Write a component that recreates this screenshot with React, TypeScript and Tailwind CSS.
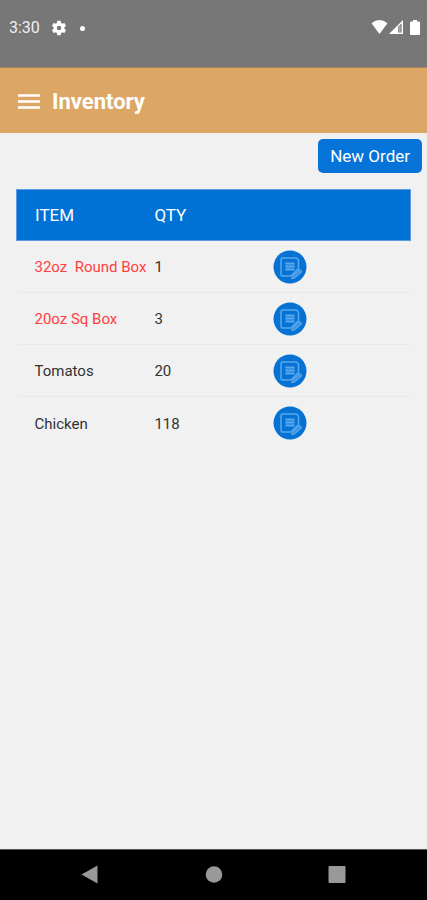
import React from 'react';

interface InventoryItem {
  id: number;
  name: string;
  qty: number;
  isLow?: boolean;
}

const items: InventoryItem[] = [
  { id: 1, name: '32oz  Round Box', qty: 1, isLow: true },
  { id: 2, name: '20oz Sq Box', qty: 3, isLow: true },
  { id: 3, name: 'Tomatos', qty: 20 },
  { id: 4, name: 'Chicken', qty: 118 },
];

const EditIcon: React.FC = () => (
  <svg viewBox="0 0 34 34" className="size-[34px]" aria-hidden="true">
    <circle cx="17" cy="17" r="16.5" fill="#0673d4" />
    <g fill="none" stroke="#5ba8ea" strokeWidth="1.5" strokeLinejoin="round">
      <path d="M25.5 18.5V10L23.5 8H9.5Q8 8 8 9.5V24.5Q8 26 9.5 26H18L25.5 18.5" />
      <path d="M18.8 28.6L19.6 25.8L26.6 19.6L28.6 21.6L21.6 27.8Z" fill="#3a92e2" strokeWidth="1.2" />
    </g>
    <path d="M12.5 12.5H21.5V20.5H12.5Z" fill="#3a92e2" />
    <path d="M12.5 13.3H21.5M12.5 16.5H21.5M12.5 19.7H21.5" stroke="#5ba8ea" strokeWidth="1.2" />
  </svg>
);

const StatusBar: React.FC = () => (
  <div className="flex h-[67px] flex-shrink-0 items-start justify-between bg-[#777777] pl-[9px] pr-[7px] pt-[18px] text-white">
    <div className="flex h-5 items-center">
      <span className="text-base text-[#f0f0f0]">3:30</span>
      <svg viewBox="0 0 24 24" className="ml-[10px] size-[18px]" fill="currentColor" aria-hidden="true">
        <path d="M19.14 12.94c.04-.3.06-.61.06-.94 0-.32-.02-.64-.07-.94l2.03-1.58c.18-.14.23-.41.12-.61l-1.92-3.32c-.12-.22-.37-.29-.59-.22l-2.39.96c-.5-.38-1.03-.7-1.62-.94l-.36-2.54c-.04-.24-.24-.41-.48-.41h-3.84c-.24 0-.43.17-.47.41l-.36 2.54c-.59.24-1.13.57-1.62.94l-2.39-.96c-.22-.08-.47 0-.59.22L2.74 8.87c-.12.21-.08.47.12.61l2.03 1.58c-.05.3-.09.63-.09.94s.02.64.07.94l-2.03 1.58c-.18.14-.23.41-.12.61l1.92 3.32c.12.22.37.29.59.22l2.39-.96c.5.38 1.03.7 1.62.94l.36 2.54c.05.24.24.41.48.41h3.84c.24 0 .44-.17.47-.41l.36-2.54c.59-.24 1.13-.56 1.62-.94l2.39.96c.22.08.47 0 .59-.22l1.92-3.32c.12-.22.07-.47-.12-.61l-2.01-1.58zM12 15a3 3 0 1 1 0-6 3 3 0 0 1 0 6z" />
      </svg>
      <span className="ml-3 size-[5px] rounded-full bg-white" />
    </div>
    <div className="flex h-[18px] items-center">
      <svg viewBox="0 0 17 14" className="h-[14px] w-[17px]" fill="currentColor" aria-hidden="true">
        <path d="M0.5 3.2Q8.5 -3.2 16.5 3.2L8.5 14Z" />
      </svg>
      <svg viewBox="0 0 14 14" className="ml-px size-[14px]" aria-hidden="true">
        <path d="M0 14L14 0V14Z" fill="#ffffff" />
        <path d="M9.2 6.6L12.6 3.4V12.6H9.2Z" fill="#777777" />
        <path d="M10.9 6V12.6" stroke="#c8c8c8" strokeWidth="1" />
      </svg>
      <svg viewBox="0 0 10 15" className="ml-[7px] h-[15px] w-[10px]" fill="currentColor" aria-hidden="true">
        <path d="M3 0H7V1.5H9Q10 1.5 10 2.5V14Q10 15 9 15H1Q0 15 0 14V2.5Q0 1.5 1 1.5H3Z" />
      </svg>
    </div>
  </div>
);

const Header: React.FC = () => (
  <header className="flex h-[66px] flex-shrink-0 items-center border-t border-[#a8875c] bg-[#dca764] px-[18px] pt-0.5 text-white">
    <button type="button" aria-label="Open menu">
      <svg viewBox="0 0 22 16" className="h-4 w-[22px]" stroke="currentColor" strokeWidth="2.5" aria-hidden="true">
        <path d="M0 1.5H22M0 7.5H22M0 13.5H22" />
      </svg>
    </button>
    <h1 className="ml-3 text-[22px] font-bold leading-7">Inventory</h1>
  </header>
);

const InventoryTable: React.FC = () => (
  <table className="w-full table-fixed border-collapse text-left">
    <thead>
      <tr className="h-[51px] border border-[#5c9be0] bg-[#0072d6] text-[17px] text-white">
        <th className="w-[35%] pl-[18px] pt-0.5 font-normal">ITEM</th>
        <th className="w-[30%] pt-0.5 font-normal">QTY</th>
        <td />
      </tr>
    </thead>
    <tbody>
      {items.map((item) => (
        <tr key={item.id} className="h-[52px] border-b border-[#e9e9e9] text-[15px] text-[#333333] last:border-b-0">
          <td className={item.isLow ? 'whitespace-pre pl-[18px] pt-0.5 text-[#ff4040]' : 'whitespace-pre pl-[18px] pt-0.5'}>
            {item.name}
          </td>
          <td className="pt-0.5">{item.qty}</td>
          <td>
            <button type="button" aria-label={`Edit ${item.name}`} className="block">
              <EditIcon />
            </button>
          </td>
        </tr>
      ))}
    </tbody>
  </table>
);

const NavigationBar: React.FC = () => (
  <nav className="flex h-[51px] flex-shrink-0 items-center justify-between border-t border-[#555555] bg-black px-20 text-[#999999]">
    <button type="button" aria-label="Back">
      <svg viewBox="0 0 20 20" className="size-5" fill="currentColor" aria-hidden="true">
        <path d="M17.5 0.5V18.5L1.5 9.5Z" />
      </svg>
    </button>
    <button type="button" aria-label="Home">
      <svg viewBox="0 0 20 20" className="size-5" aria-hidden="true">
        <circle cx="10" cy="9.5" r="8.3" fill="currentColor" />
      </svg>
    </button>
    <button type="button" aria-label="Recent apps">
      <svg viewBox="0 0 20 20" className="size-5" aria-hidden="true">
        <rect x="1.5" y="1" width="17" height="17" rx="1" fill="currentColor" />
      </svg>
    </button>
  </nav>
);

const App: React.FC = () => {
  return (
    <div className="flex min-h-screen flex-col bg-[#f1f1f1] font-[Roboto,sans-serif]">
      <StatusBar />
      <Header />
      <main className="flex-1">
        <div className="flex justify-end px-[5px] pt-[6px]">
          <button type="button" className="h-[34px] rounded-[5px] bg-[#0673d8] px-3 pt-0.5 text-[17px] text-white">
            New Order
          </button>
        </div>
        <div className="px-4 pt-4">
          <InventoryTable />
        </div>
      </main>
      <NavigationBar />
    </div>
  );
};

export default App;
